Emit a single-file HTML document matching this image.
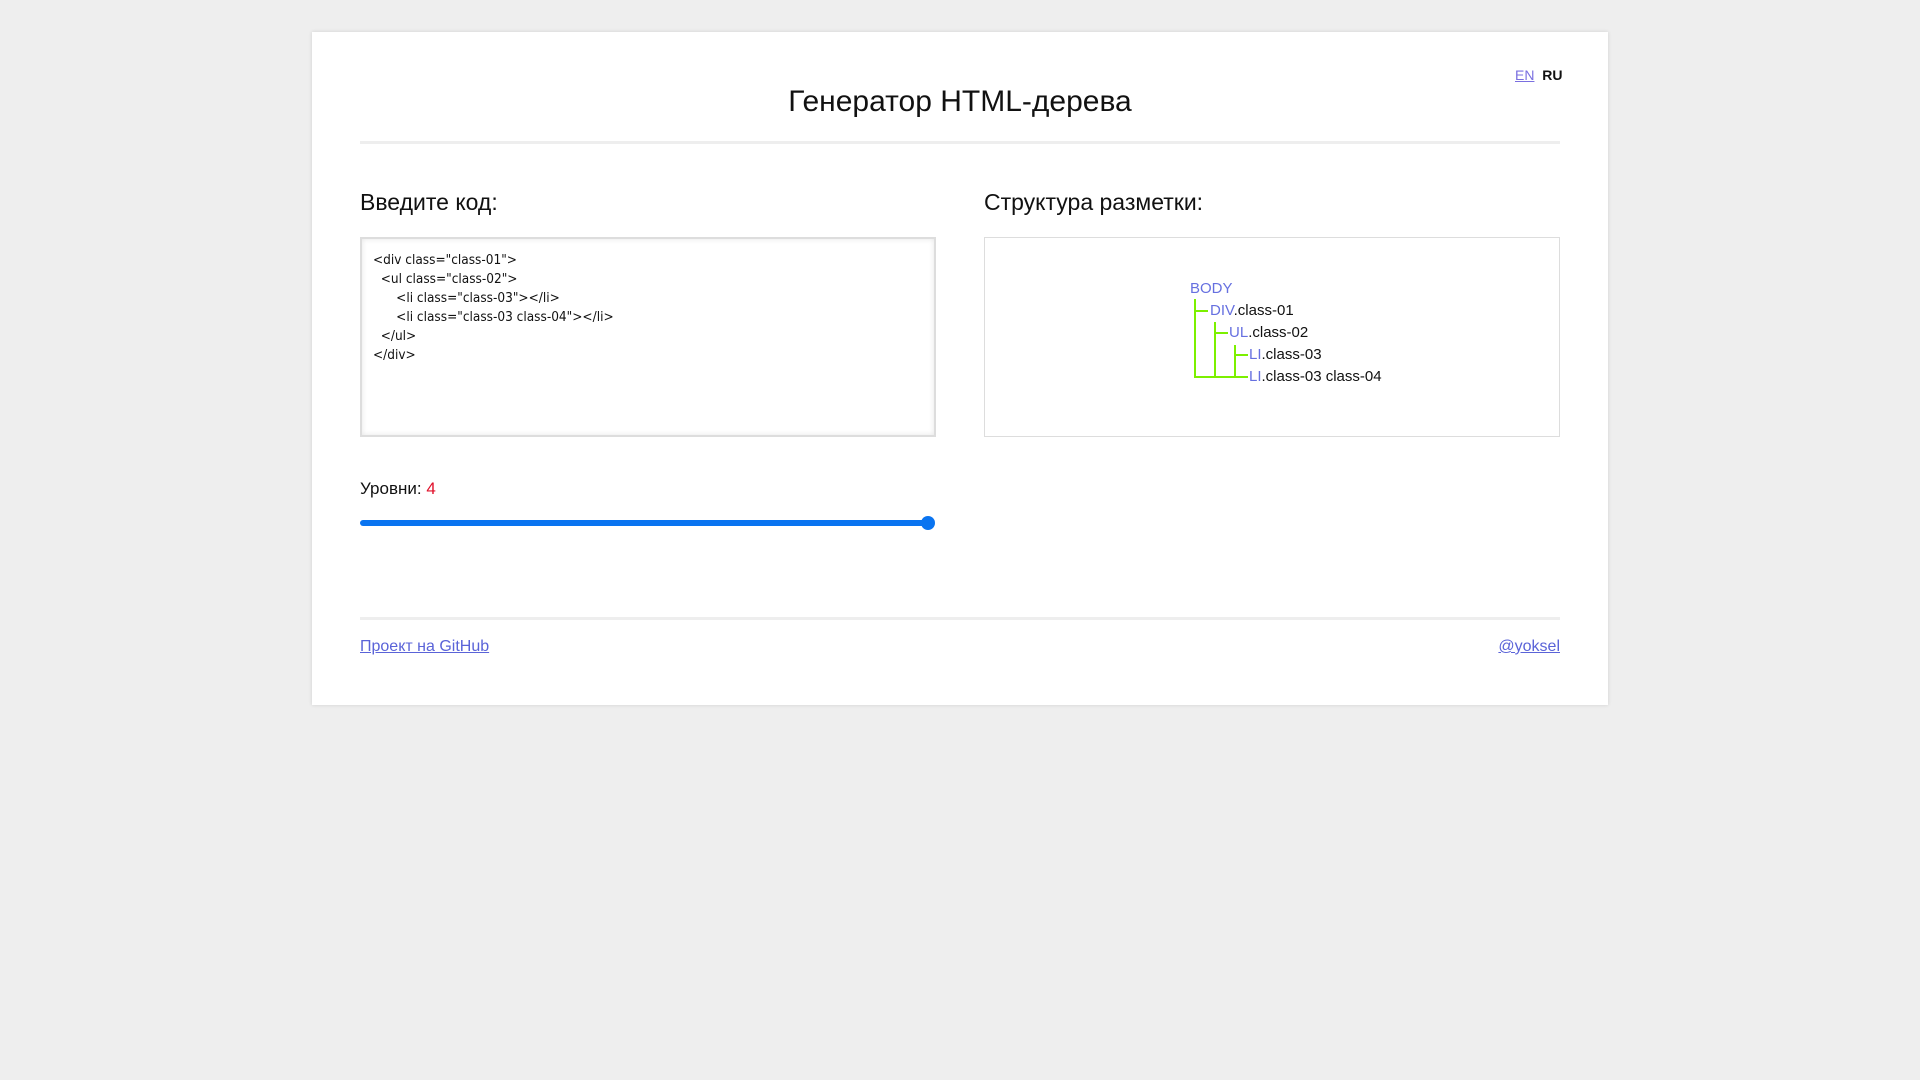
<!DOCTYPE html>
<html><head><meta charset="utf-8"><style>
body{margin:0;background:#eee;font-family:"Liberation Sans",sans-serif;width:1920px;height:1080px;position:relative;overflow:hidden;color:#111}
.card{position:absolute;left:312px;top:32px;width:1296px;height:673px;background:#fff;box-shadow:0 0 4px rgba(0,0,0,.12)}
.a{position:absolute;white-space:nowrap}
.hr{position:absolute;left:48px;width:1200px;height:3px;background:#eee}
a{color:#5a63d8}
.tag{color:#6670e0}
.g{position:absolute;background:#7cf000}
</style></head><body>
<div class="card">
 <div class="a" style="left:1203px;top:35px;font-size:14px"><a href="#" style="color:#7a6fe0">EN</a>&nbsp;&nbsp;<b style="font-weight:bold">RU</b></div>
 <div class="a" style="left:0;width:1296px;text-align:center;top:53px;font-size:30px">Генератор HTML-дерева</div>
 <div class="hr" style="top:109px"></div>
 <div class="a" style="left:48px;top:157px;font-size:23px">Введите код:</div>
 <div class="a" style="left:672px;top:157px;font-size:23px">Структура разметки:</div>
 <div style="position:absolute;left:48px;top:205px;width:572px;height:196px;border:2px solid #ddd;box-shadow:inset 0 0 6px rgba(0,0,0,.1)">
  <pre style="margin:0;position:absolute;left:11px;top:12px;font-family:'DejaVu Sans Condensed','Liberation Sans Narrow',sans-serif;font-size:13.5px;line-height:19px;color:#111">&lt;div class="class-01"&gt;
  &lt;ul class="class-02"&gt;
      &lt;li class="class-03"&gt;&lt;/li&gt;
      &lt;li class="class-03 class-04"&gt;&lt;/li&gt;
  &lt;/ul&gt;
&lt;/div&gt;</pre>
 </div>
 <div style="position:absolute;left:672px;top:205px;width:574px;height:198px;border:1px solid #ddd"></div>
 <div style="position:absolute;left:878px;top:246px;font-size:15px;line-height:22px;white-space:nowrap">
  <div class="tag">BODY</div>
  <div style="padding-left:20px"><span class="tag">DIV</span>.class-01</div>
  <div style="padding-left:39px"><span class="tag">UL</span>.class-02</div>
  <div style="padding-left:59px"><span class="tag">LI</span>.class-03</div>
  <div style="padding-left:59px"><span class="tag">LI</span>.class-03 class-04</div>
 </div>
 <div class="g" style="left:882px;top:267px;width:2px;height:78px"></div>
 <div class="g" style="left:902px;top:290px;width:2px;height:55px"></div>
 <div class="g" style="left:922px;top:313px;width:2px;height:32px"></div>
 <div class="g" style="left:882px;top:278px;width:14px;height:2px"></div>
 <div class="g" style="left:902px;top:300px;width:14px;height:2px"></div>
 <div class="g" style="left:922px;top:322px;width:14px;height:2px"></div>
 <div class="g" style="left:882px;top:344px;width:54px;height:2px"></div>
 <div class="a" style="left:48px;top:447px;font-size:17px">Уровни: <span style="color:#e0102a">4</span></div>
 <div style="position:absolute;left:48px;top:488px;width:566px;height:6px;border-radius:3px;background:#0a74f0"></div>
 <div style="position:absolute;left:609px;top:484px;width:14px;height:14px;border-radius:50%;background:#0a74f0"></div>
 <div class="hr" style="top:585px"></div>
 <div class="a" style="left:48px;top:606px;font-size:16px"><a href="#">Проект на GitHub</a></div>
 <div class="a" style="right:48px;top:606px;font-size:16px"><a href="#">@yoksel</a></div>
</div>
</body></html>
